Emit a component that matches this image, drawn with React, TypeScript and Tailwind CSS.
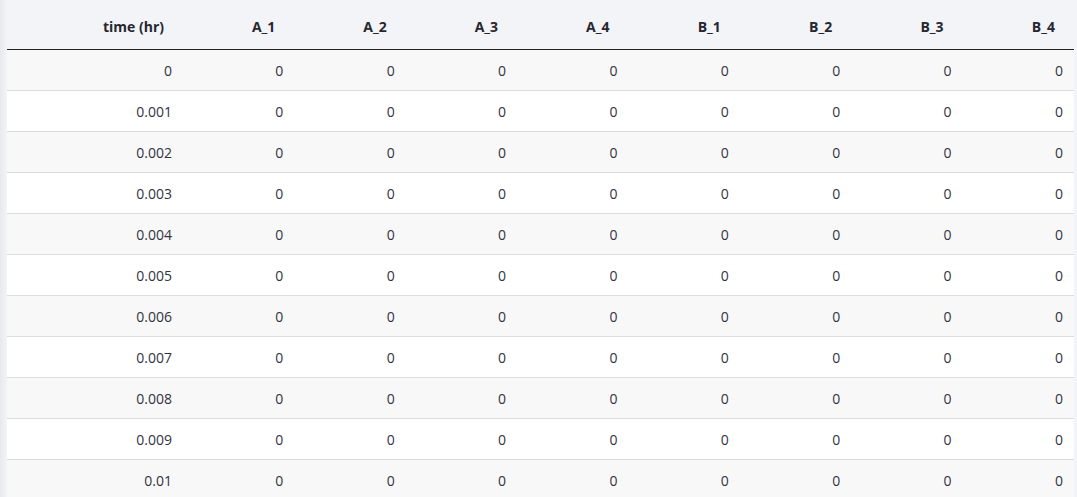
const columns = ["A_1", "A_2", "A_3", "A_4", "B_1", "B_2", "B_3", "B_4"];

const times = ["0", "0.001", "0.002", "0.003", "0.004", "0.005", "0.006", "0.007", "0.008", "0.009", "0.01"];

export default function App() {
  return (
    <div
      className="flex h-[497px] w-[1077px] overflow-hidden bg-[#f3f4f8] text-[14px] text-[#31333f]"
      style={{ fontFamily: '"Open Sans", "Noto Sans", sans-serif' }}
    >
      <div className="w-[7px] shrink-0 bg-gradient-to-r from-[#e8e9ee] to-[#f3f4f8]" />
      <div className="w-[1067px] shrink-0">
        <table className="w-full table-fixed border-collapse">
          <colgroup>
            <col className="w-[176px]" />
            {columns.map((c) => (
              <col key={c} />
            ))}
          </colgroup>
          <thead>
            <tr className="h-[49px] bg-[#f3f4f8] border-b border-[#222]">
              <th className="pr-[19px] pt-[5px] text-right font-bold text-[#262730]">time (hr)</th>
              {columns.map((c) => (
                <th key={c} className="pr-[19px] pt-[5px] text-right font-bold text-[#262730]">
                  {c}
                </th>
              ))}
            </tr>
          </thead>
          <tbody>
            {times.map((t, i) => (
              <tr
                key={t}
                className={`h-[41px] border-b border-[#dddddd] ${i % 2 === 0 ? "bg-[#f8f8f8]" : "bg-white"}`}
              >
                <td className="pr-[11px] pt-[2px] text-right">{t}</td>
                {columns.map((c) => (
                  <td key={c} className="pr-[11px] pt-[2px] text-right">
                    0
                  </td>
                ))}
              </tr>
            ))}
          </tbody>
        </table>
      </div>
      <div className="flex-1" />
    </div>
  );
}
